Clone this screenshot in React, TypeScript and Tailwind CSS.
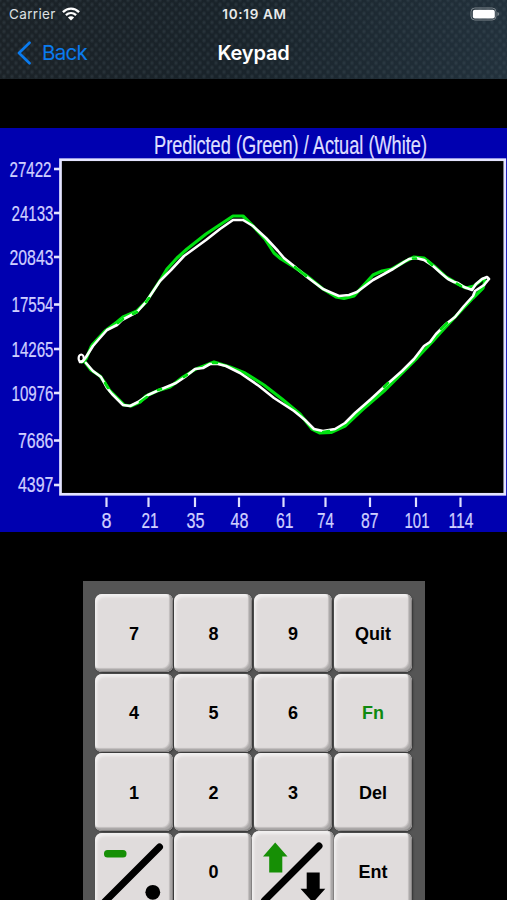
import type { ReactNode } from "react";

const yAxis = [
  { label: "27422", tick: 169, base: 177, x: 9.5, w: 42 },
  { label: "24133", tick: 213, base: 221, x: 11.5, w: 42 },
  { label: "20843", tick: 257, base: 265, x: 9.5, w: 44 },
  { label: "17554", tick: 304.5, base: 312.3, x: 11.5, w: 42 },
  { label: "14265", tick: 349, base: 356.6, x: 11.5, w: 42 },
  { label: "10976", tick: 393, base: 401, x: 11.5, w: 42 },
  { label: "7686", tick: 440.5, base: 448, x: 18, w: 35.5 },
  { label: "4397", tick: 485, base: 492.3, x: 18, w: 35.5 },
];

const xAxis = [
  { label: "8", tick: 106.5, x: 101.5, w: 10 },
  { label: "21", tick: 148.5, x: 141.5, w: 17 },
  { label: "35", tick: 195, x: 186.5, w: 18 },
  { label: "48", tick: 239, x: 230.5, w: 18 },
  { label: "61", tick: 283.5, x: 276, w: 17.5 },
  { label: "74", tick: 325.5, x: 317, w: 17 },
  { label: "87", tick: 370, x: 361, w: 17.5 },
  { label: "101", tick: 416, x: 404.5, w: 25 },
  { label: "114", tick: 460.5, x: 448.5, w: 25 },
];

const predicted =
  "82,362 86,359 91,347 93,344 105,331 117,322 123,317 137,311 146,302 161,279 167,269 177,258 187,249 206,234 221,224 233,216 243,216 253,226 265,239 274,253 281,259 294,267 307,276 323,289 336,297 344,298.5 354,296 363,286 373,275 382,271 392,269 404,262 414,257 424,258 434,266 446,277 458,284 466,288 474,286 483,279 485,281 483,288 473,298 456,316 442,331 433,341 417,358 399,376 384,391 362,410 345,426 331,432.5 320,433 312,429 300,414 282,399 264,385 245,373 230,367 214,362 204,366 196,369 183,377 170,387 157,391 146,396 140,402 131,406 124,405 110,391 105,383 100,376 91,370 85,362";

const actual =
  "80,362 83,361 86,357 93,346 99,339 107,330 117,325 122,320 137,312 146,302 160,281 171,270 184,256 206,240 220,229 233,220 243,220 253,226 266,238 278,251 284,258 294,266 307,277 323,289 332,293 339,296 349,295 357,292 373,280 384,274 393,269 404,262 409,259 416,258 424,260 433,266 442,274 448,279 454,282 458,283 464,287 472,290 476,284 482,279 487,277 489,279 484,285 478,289 475,291 473,296 464,306 455,317 446,324 436,334 430,342 424,346 414,359 402,371 384,387 371,399 355,413 345,423 335,429 323,431 314,429 305,420 294,411 274,398 259,386 240,373 226,366 218,364 210,364 203,368 195,369 185,377 176,383 164,388 157,391 148,395 138,402 130,406 123,405 112,394 107,388 101,377 93,371 86,363";

// Every chart label is squeezed horizontally by this factor
const SQUEEZE = 0.74;

function ChartText({ x, y, w, size, fill, children }: { x: number; y: number; w: number; size: number; fill: string; children: string }) {
  return (
    <text
      transform={`translate(${x} ${y}) scale(${SQUEEZE} 1)`}
      fontSize={size}
      fill={fill}
      stroke={fill}
      strokeWidth="0.25"
      textLength={w / SQUEEZE}
      lengthAdjust="spacingAndGlyphs"
    >
      {children}
    </text>
  );
}

function SensorChart() {
  return (
    <svg
      viewBox="0 128 507 404"
      className="block h-[404px] w-full bg-[#0000b0]"
      fontFamily='"Liberation Sans", Arial, sans-serif'
    >
      <rect x="60.5" y="159.7" width="444.3" height="334.6" fill="#000" stroke="#e4e4ff" strokeWidth="2.7" />
      <ChartText x={154} y={154.4} w={273} size={26.5} fill="#dedeff">
        Predicted (Green) / Actual (White)
      </ChartText>
      {yAxis.map((t) => (
        <g key={t.label}>
          <path d={`M54 ${t.tick}h6`} stroke="#e4e4ff" strokeWidth="2.6" />
          <ChartText x={t.x} y={t.base} w={t.w} size={22.3} fill="#cfcfff">
            {t.label}
          </ChartText>
        </g>
      ))}
      {xAxis.map((t) => (
        <g key={t.label}>
          <path d={`M${t.tick} 497.5v9.5`} stroke="#dedeff" strokeWidth="2.2" />
          <ChartText x={t.x} y={527.6} w={t.w} size={22.3} fill="#cfcfff">
            {t.label}
          </ChartText>
        </g>
      ))}
      <g fill="none" strokeLinejoin="round" strokeLinecap="round">
        <polyline points={predicted} stroke="#00e010" strokeWidth="3.2" />
        <polyline points={actual} stroke="#fff" strokeWidth="2.6" />
        {/* stretches where the prediction runs on top of the reading */}
        <path
          d="M118 323 123 319M133 314 137 312M146 302 149 298M105 383 108 388M140 402 147 397M158 390 161 389M184 377 187 375M213 363 217 363M295 267 306 276M413 258.5h3M428 261 432 265M457 283.5 461 286M447 323 441 329M384 387 388 383M323 432 329 431"
          stroke="#00e010"
          strokeWidth="2.6"
        />
        <ellipse cx="81.2" cy="358.3" rx="2.6" ry="3.8" stroke="#fff" strokeWidth="2.2" />
      </g>
    </svg>
  );
}

function Key({ children, className = "" }: { children: ReactNode; className?: string }) {
  return (
    <button
      className={`flex h-[78px] w-[78px] items-center justify-center rounded-[7px] bg-[#e0dcdc] pl-px pt-[2px] text-[18px] font-bold shadow-[inset_-1px_-1px_1px_#858383,inset_-3px_-3px_1px_#aaa7a7,inset_-4px_-4px_1px_#c4c0c0,inset_2px_3px_3px_#f2f0f0,1px_1px_2px_#333] ${className}`}
    >
      {children}
    </button>
  );
}

function SignDotIcon() {
  return (
    <svg viewBox="0 0 78 78" className="h-[78px] w-[78px] shrink-0">
      <rect x="9" y="17" width="22.5" height="7.5" rx="3.5" fill="#168f05" />
      <path d="M64.5 14 10 68.5" stroke="#000" strokeWidth="7" strokeLinecap="round" />
      <circle cx="57.8" cy="59.3" r="7.4" />
    </svg>
  );
}

function UpDownIcon() {
  return (
    <svg viewBox="0 0 82 82" className="h-[82px] w-[82px] shrink-0">
      <path d="M23.2 11.5 35.5 25.5h-5.2v16H17.2v-16H11z" fill="#168f05" />
      <path d="M67 15 12.5 69.5" stroke="#000" strokeWidth="7" strokeLinecap="round" />
      <path d="M54.7 41.5h13v16.3h5.6L61 71.5 48.5 57.8h6.2z" />
    </svg>
  );
}

export default function App() {
  return (
    <div className="flex h-[900px] w-full flex-col overflow-hidden bg-black font-[Inter,'Liberation_Sans',sans-serif]">
      {/* Status bar + navigation */}
      <header className="h-[79px] shrink-0 bg-[#202a32] bg-[radial-gradient(ellipse_at_center,#5b6b7548_0,transparent_45%),radial-gradient(ellipse_at_center,#5b6b7548_0,transparent_45%),linear-gradient(100deg,#1b2227_0%,#19232a_45%,#22313c_100%)] bg-[length:8px_9px,8px_9px,100%_100%] bg-[position:0_0,4px_4.5px,0_0] text-white">
        <div className="grid h-7 grid-cols-3 items-center pl-[9px] pr-[7px] text-[13px]">
          <div className="flex items-center gap-[6px] text-[#dde0e2]">
            <span className="w-[47px] text-[13.5px] tracking-[0.35px]">Carrier</span>
            <svg viewBox="0 0 18 14" className="h-[14px] w-[18px]" fill="none" stroke="#fff" strokeWidth="2.3">
              <path d="M.9 5.1C5.6.4 12.4.4 17.1 5.1M3.9 8.2c3.1-2.8 7.1-2.8 10.2 0" />
              <path d="M9 13.5 5.9 10.4c1.8-1.5 4.4-1.5 6.2 0z" fill="#fff" stroke="none" />
            </svg>
          </div>
          <span className="whitespace-nowrap text-center text-[13.5px] font-semibold tracking-[0.7px] text-[#e8eaeb]">10:19 AM</span>
          <svg viewBox="0 0 30 14" className="h-[14px] w-[30px] justify-self-end">
            <rect x="1" y="1" width="25" height="12" rx="3.8" fill="none" stroke="#7c858b" />
            <rect x="2.8" y="2.8" width="22" height="8.6" rx="2" fill="#fff" />
            <path d="M27.4 5q1.8.5 1.8 2t-1.8 2z" fill="#7c858b" />
          </svg>
        </div>
        <div className="grid h-[49px] grid-cols-3 items-center">
          <button className="flex items-center gap-[10px] pl-[17px] text-[20.5px] tracking-[-0.7px] text-[#0a7bef]">
            <svg viewBox="0 0 15 24" className="h-6 w-[15px]" fill="none" stroke="currentColor" strokeWidth="2.7" strokeLinecap="round" strokeLinejoin="round">
              <path d="M12.5 1.8 2 12l10.5 10.2" />
            </svg>
            <span className="pt-px">Back</span>
          </button>
          <h1 className="text-center text-[20px] font-semibold tracking-[-0.2px]">Keypad</h1>
        </div>
      </header>

      <main className="flex flex-col items-center pt-[49px]">
        <SensorChart />

        {/* Keypad */}
        <div className="mt-[49px] h-[400px] w-[342px] bg-[#555] pl-3 pt-[13px] font-['Liberation_Sans',Arial,sans-serif]">
          <div className="grid grid-cols-[79.5px_79.5px_80px_78px] auto-rows-[79.5px]">
            <Key>7</Key>
            <Key>8</Key>
            <Key>9</Key>
            <Key>Quit</Key>
            <Key>4</Key>
            <Key>5</Key>
            <Key>6</Key>
            <Key className="text-[#108a10]">Fn</Key>
            <Key>1</Key>
            <Key>2</Key>
            <Key>3</Key>
            <Key>Del</Key>
            <Key className="!p-0">
              <SignDotIcon />
            </Key>
            <Key>0</Key>
            <Key className="-ml-[2px] -mt-[2px] !h-[82px] !w-[82px] !p-0">
              <UpDownIcon />
            </Key>
            <Key>Ent</Key>
          </div>
        </div>
      </main>
    </div>
  );
}
